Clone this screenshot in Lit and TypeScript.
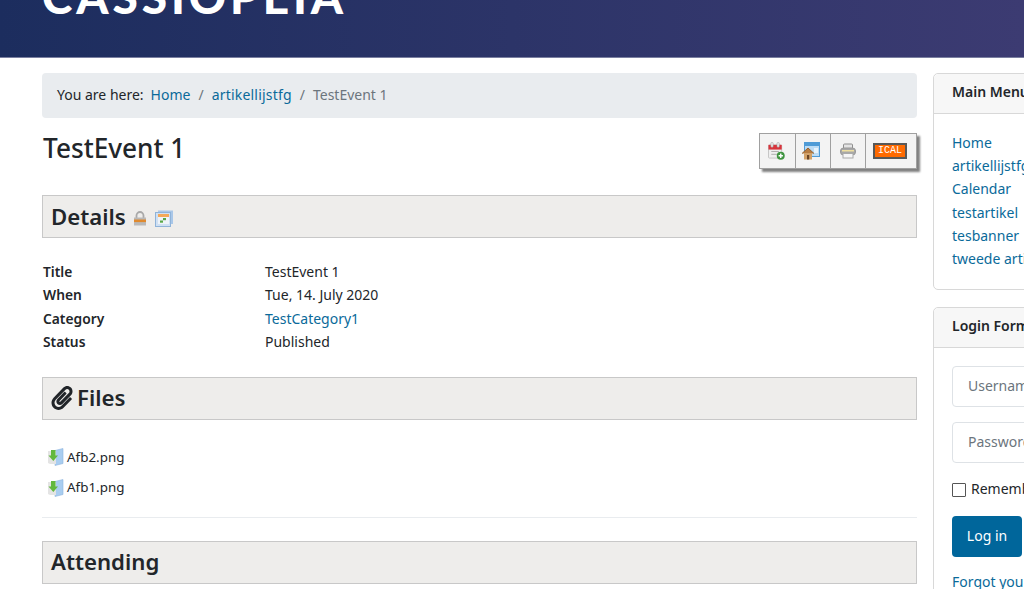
import { LitElement, html, css, svg } from "lit";
import { customElement } from "lit/decorators.js";

const calAdd = svg`<svg class="cal" width="17" height="18" viewBox="0 0 18 19"><rect x="0.5" y="3" width="14" height="14" rx="1" fill="#efefef" stroke="#c4c4c4"/><rect x="0.5" y="3" width="14" height="5" fill="#d8343c"/><rect x="3" y="0.5" width="2.5" height="5" rx="1" fill="#e8e8e8" stroke="#999" stroke-width=".5"/><rect x="9.5" y="0.5" width="2.5" height="5" rx="1" fill="#e8e8e8" stroke="#999" stroke-width=".5"/><path d="M3.500 10h8M3.500 13h6" stroke="#aaa"/><circle cx="13.500" cy="14.500" r="4.200" fill="#3f9440"/><path d="M11.200 14.500h4.600M13.500 12.200v4.600" stroke="#fff" stroke-width="1.500"/></svg>`;
const home = svg`<svg class="home" width="18" height="18" viewBox="0 0 18 18"><rect x="2.500" y="0.500" width="15" height="14" fill="#bcdcf5" stroke="#4f9bd6"/><rect x="3" y="1" width="14" height="3" fill="#4f9bd6"/><rect x="12" y="6" width="4" height="5" fill="#e8f3fb"/><path d="M0 11.500L6 6l6 5.500" fill="#b67c42" stroke="#94612f"/><rect x="2" y="11" width="8" height="6.500" fill="#d2a26a"/><rect x="5" y="13" width="2.200" height="4.500" fill="#6b4423"/></svg>`;
const printer = svg`<svg class="print" width="16" height="16" viewBox="0 0 16 16"><rect x="3.500" y="1" width="9" height="5" rx="1" fill="#e4e4e4" stroke="#8d8d8d"/><rect x="0.500" y="5" width="15" height="7" rx="3" fill="#a8a8a8" stroke="#999"/><rect x="3" y="10.500" width="10" height="4.500" fill="#f6f6f6" stroke="#aaa"/><rect x="2" y="7" width="12" height="1.500" fill="#efe0a0"/></svg>`;
const lock = svg`<svg width="14" height="15" viewBox="0 0 14 15"><path d="M3.500 7V4.500a3.500 3.500 0 0 1 7 0V7" fill="none" stroke="#a9a9a9" stroke-width="1.800"/><rect x="1" y="6.500" width="12" height="8" fill="#b9b9b9"/><rect x="1" y="8.500" width="12" height="2.600" fill="#e08a2e"/></svg>`;
const calEdit = svg`<svg width="18" height="17" viewBox="0 0 18 17"><rect x="3" y="0.500" width="15" height="13.500" fill="#a9c7e8"/><rect x="0.500" y="2.500" width="15" height="14" fill="#cfe0f3" stroke="#8fb3d9"/><rect x="3" y="4" width="11" height="3" fill="#f3a95a"/><rect x="3" y="7" width="11" height="7" fill="#eef3f8"/><rect x="8" y="8" width="3" height="2.200" fill="#58a848"/><rect x="5" y="10.500" width="3" height="2.200" fill="#58a848"/></svg>`;
const clip = svg`<svg class="clip" width="22" height="24" viewBox="0 0 448 512" fill="#212529"><path d="M43.246 466.142c-58.43-60.289-57.341-157.511 1.386-217.581L254.392 34c44.316-45.332 116.351-45.336 160.671 0 43.89 44.894 43.943 117.329 0 162.276L232.214 383.128c-29.855 30.537-78.633 30.111-107.982-.998-28.275-29.97-27.368-77.473 1.452-106.953l143.743-146.835c6.182-6.314 16.312-6.422 22.626-.241l22.861 22.379c6.315 6.182 6.422 16.312.241 22.626L171.427 319.927c-4.932 5.045-5.236 13.428-.648 18.292 4.372 4.634 11.245 4.711 15.688.165l182.849-186.851c19.613-20.062 19.613-52.725-.011-72.798-19.189-19.627-49.957-19.637-69.154 0L90.39 293.295c-34.763 35.56-35.299 93.12-1.191 128.313 34.01 35.093 88.985 35.137 123.058.286l172.06-175.999c6.177-6.319 16.307-6.433 22.626-.256l22.877 22.364c6.319 6.177 6.434 16.307.256 22.626l-172.06 175.998c-59.576 60.938-155.943 60.216-214.77-.485z"/></svg>`;
const dl = svg`<svg width="17" height="18" viewBox="0 0 17 18"><path d="M8 2.500l8-2v15l-8 2z" fill="#a9cdf0" stroke="#8fb6df" stroke-width=".6"/><path d="M1 3h8v13H3l-2-1z" fill="#e4e4e4"/><path d="M4 2h4.500v5.500H11l-4.700 5.500L1.500 7.500H4z" fill="#62b83e"/></svg>`;

@customElement("app-root")
export class AppRoot extends LitElement {
  static styles = css`
    :host { display: block; width: 1024px; height: 589px; overflow: hidden; background: #fff; color: #22262a; font-family: "Noto Sans", "Open Sans", sans-serif; font-size: 14px; line-height: 23.2px; }
    a { color: #0a6a9a; text-decoration: none; }
    .header { height: 57px; border-bottom: 1px solid #7a7fa0; background: linear-gradient(90deg, #1c2d5e 0%, #3c3b72 100%); padding-left: 42px; overflow: hidden; }
    .logo { display: block; margin-top: -25px; color: #fff; font-family: Lato, sans-serif; font-weight: 900; font-size: 46px; line-height: 44px; letter-spacing: 3.9px; white-space: nowrap; }
    .grid { display: grid; grid-template-columns: 875px 200px; column-gap: 16px; padding: 15px 0 0 42px; width: 1100px; }
    .crumb { height: 45px; box-sizing: border-box; display: flex; align-items: center; gap: 8px; padding: 0 0 1px 15px; background: #e9ecef; border-radius: 4px; }
    .crumb .you { margin-right: -1px; }
    .crumb .art { letter-spacing: .2px; }
    .crumb .sep { color: #6c757d; }
    .crumb .cur { color: #6c757d; }
    .titlerow { display: flex; justify-content: space-between; margin-top: 14px; height: 63px; }
    h1 { margin: 0 0 0 1px; font-size: 26.2px; line-height: 32px; font-weight: 500; }
    .tools { display: flex; align-self: flex-start; height: 34px; margin: 1px 0 0; background: #f3f3f3; border: 1px solid #a0a0a0; box-shadow: 3px 3px 2px #808080; }
    .tools span { display: flex; align-items: center; justify-content: center; width: 34px; border-left: 1px solid #a0a0a0; }
    .tools span:first-child { border-left: 0; width: 35px; }
    .tools span.ical { width: 50px; }
    .cal { margin: 0 2px 0 0; }
    .home { margin-right: 5px; }
    .print { margin-right: 1px; }
    .ical b { display: block; width: 30px; height: 12px; margin-right: 2px; background: #ff6a00; border: 2px solid #585858; color: #fff; font: 400 10px/12px "Liberation Mono", monospace; text-align: center; }
    h2 { margin: 0; box-sizing: border-box; height: 43px; padding-left: 8px; display: flex; align-items: center; background: #eeedeb; border: 1px solid #c8c8c8; font-size: 22.2px; font-weight: 600; line-height: 30px; }
    .clip { margin-right: 4px; }
    .ic2 { display: flex; gap: 8px; align-items: center; margin: 4px 0 0 7px; }
    dl { display: grid; grid-template-columns: 222px 1fr; margin: 22.1px 0 23.9px 1px; }
    dt { font-weight: 600; font-size: 13.8px; }
    dd { margin: 0; }
    .files { margin: 22.6px 0 14px 5px; }
    .file { display: flex; align-items: center; gap: 3px; height: 30.2px; font-size: 13.4px; }
    hr { border: 0; border-top: 1px solid #e9ecef; margin: 0 0 23px; }
    .card { border: 1px solid #d8d8d8; border-radius: 5px; margin-bottom: 17px; width: 200px; }
    .card h3 { margin: 0; height: 40px; box-sizing: border-box; padding: 0 18px 3px; display: flex; align-items: center; background: #f7f7f7; border-bottom: 1px solid #d8d8d8; border-radius: 5px 5px 0 0; font-size: 14px; font-weight: 600; white-space: nowrap; }
    .body { padding: 16.95px 18px 18.85px; }
    .login { padding-top: 18px; }
    .body a { display: block; white-space: nowrap; }
    .input { height: 41px; box-sizing: border-box; border: 1px solid #dee2e6; border-radius: 4px; padding: 0 0 2px 15px; display: flex; align-items: center; color: #6c757d; margin-bottom: 15px; }
    .rem { display: flex; align-items: center; gap: 5px; height: 23px; margin-bottom: 15px; }
    .rem span { margin-top: -2px; }
    .btn { display: inline-flex; align-items: center; justify-content: center; width: 70px; height: 41px; box-sizing: border-box; padding-bottom: 2px; border-radius: 4px; background: #00669b; color: #fff; margin-bottom: 13px; vertical-align: top; }
    .rem i { display: block; width: 12px; height: 12px; border: 1px solid #555; border-radius: 1px; }
  `;
  render() {
    return html`
      <div class="header"><span class="logo">CASSIOPEIA</span></div>
      <div class="grid">
        <main>
          <nav class="crumb"><span class="you">You are here:</span><a href="#">Home</a><span class="sep">/</span><a class="art" href="#">artikellijstfg</a><span class="sep">/</span><span class="cur">TestEvent 1</span></nav>
          <div class="titlerow"><h1>TestEvent 1</h1>
            <div class="tools"><span>${calAdd}</span><span>${home}</span><span>${printer}</span><span class="ical"><b>ICAL</b></span></div>
          </div>
          <h2>Details <span class="ic2">${lock}${calEdit}</span></h2>
          <dl>
            <dt>Title</dt><dd>TestEvent 1</dd>
            <dt>When</dt><dd>Tue, 14. July 2020</dd>
            <dt>Category</dt><dd><a href="#">TestCategory1</a></dd>
            <dt>Status</dt><dd>Published</dd>
          </dl>
          <h2>${clip}Files</h2>
          <div class="files">
            <div class="file">${dl}<span>Afb2.png</span></div>
            <div class="file">${dl}<span>Afb1.png</span></div>
          </div>
          <hr />
          <h2>Attending</h2>
        </main>
        <aside>
          <div class="card"><h3>Main Menu</h3><div class="body">
            <a href="#">Home</a><a href="#">artikellijstfg</a><a href="#">Calendar</a><a href="#">testartikel</a><a href="#">tesbanner</a><a href="#">tweede artikel</a>
          </div></div>
          <div class="card"><h3>Login Form</h3><div class="body login">
            <div class="input">Username</div><div class="input">Password</div>
            <div class="rem"><i></i><span>Remember Me</span></div>
            <div class="btn">Log in</div>
            <a href="#">Forgot your password?</a>
          </div></div>
        </aside>
      </div>`;
  }
}
